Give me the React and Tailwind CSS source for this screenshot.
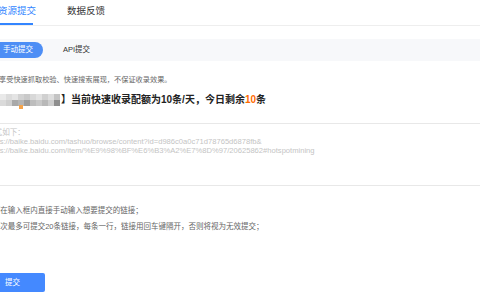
import React from 'react';

const mosaic = [
  ['#e9e9e9', '#dcdcdc', '#e4e4e4', '#d2d2d2', '#c9c9c9', '#d8d8d8', '#e2e2e2', '#d0d0d0', '#dedede', '#c4c4c4'],
  ['#dadada', '#cfcfcf', '#a9a9a9', '#b4b4b4', '#9c9c9c', '#bdbdbd', '#c8c8c8', '#b8b8b8', '#cdcdcd', '#8e8e8e'],
];

function Tabs() {
  return (
    <div className="flex items-end gap-[31px] h-[26px] border-b border-[#eeeeee] pl-[18px]">
      <div className="h-full flex flex-col justify-end">
        <span className="text-[9.5px] leading-none text-[#3385ff] pb-[8px]">资源提交</span>
        <div className="h-[2px] bg-[#3385ff] w-[35px]" />
      </div>
      <span className="text-[9.5px] leading-none text-[#333] pb-[10px]">数据反馈</span>
    </div>
  );
}

function SubTabs() {
  return (
    <div className="mt-[13px] h-[22px] bg-[#f7f8fa] flex items-center pl-[13px]">
      <span className="h-[16px] px-[10px] rounded-full bg-[#4d8ef5] text-white text-[7.5px] flex items-center">手动提交</span>
      <span className="ml-[20px] text-[7.5px] text-[#333]">API提交</span>
    </div>
  );
}

function Mosaic() {
  return (
    <div className="relative flex flex-col">
      {mosaic.map((row, r) => (
        <div key={r} className="flex">
          {row.map((c, i) => (
            <div key={i} className="w-[6px] h-[6px]" style={{ background: c }} />
          ))}
        </div>
      ))}
      <div className="absolute left-[19px] top-[11px] w-[4px] h-[4px] bg-[#f5a34a]" />
    </div>
  );
}

export default function App() {
  return (
    <div className="w-[480px] h-[300px] overflow-hidden bg-white font-['Liberation_Sans','Noto_Sans_CJK_SC',sans-serif]">
      <div className="-ml-[20px] w-[520px]">
        <Tabs />
        <SubTabs />

        <p className="mt-[14px] pl-[19px] text-[7.2px] leading-[10px] text-[#666]">享受快速抓取校验、快速搜索展现，不保证收录效果。</p>

        <div className="mt-[9px] pl-[20px] flex items-center gap-[1px] h-[12px]">
          <Mosaic />
          <span className="text-[10px] font-bold text-[#222] leading-none">
            】当前快速收录配额为10条/天，今日剩余<span className="text-[#ff6a00]">10</span>条
          </span>
        </div>

        <div className="mt-[17px] h-[63px] border-y border-[#e8e8e8] pl-[7px] pt-[4px] text-[7.6px] leading-[9px] text-[#c4c4c4]">
          <div>格式如下：</div>
          <div>https://baike.baidu.com/tashuo/browse/content?id=d986c0a0c71d78765d6878fb&amp;</div>
          <div>https://baike.baidu.com/item/%E9%98%BF%E6%B3%A2%E7%8D%97/20625862#hotspotmining</div>
        </div>

        <div className="mt-[17px] pl-[1px] text-[7.5px] leading-[15.5px] text-[#666]">
          <p>1、可在输入框内直接手动输入想要提交的链接；</p>
          <p>2、每次最多可提交20条链接，每条一行，链接用回车键隔开，否则将视为无效提交；</p>
        </div>

        <button className="mt-[39px] ml-[1px] w-[64px] h-[19px] rounded-[2px] bg-[#4489ff] text-white text-[7.5px] text-left pl-[24px]">
          提交
        </button>
      </div>
    </div>
  );
}
